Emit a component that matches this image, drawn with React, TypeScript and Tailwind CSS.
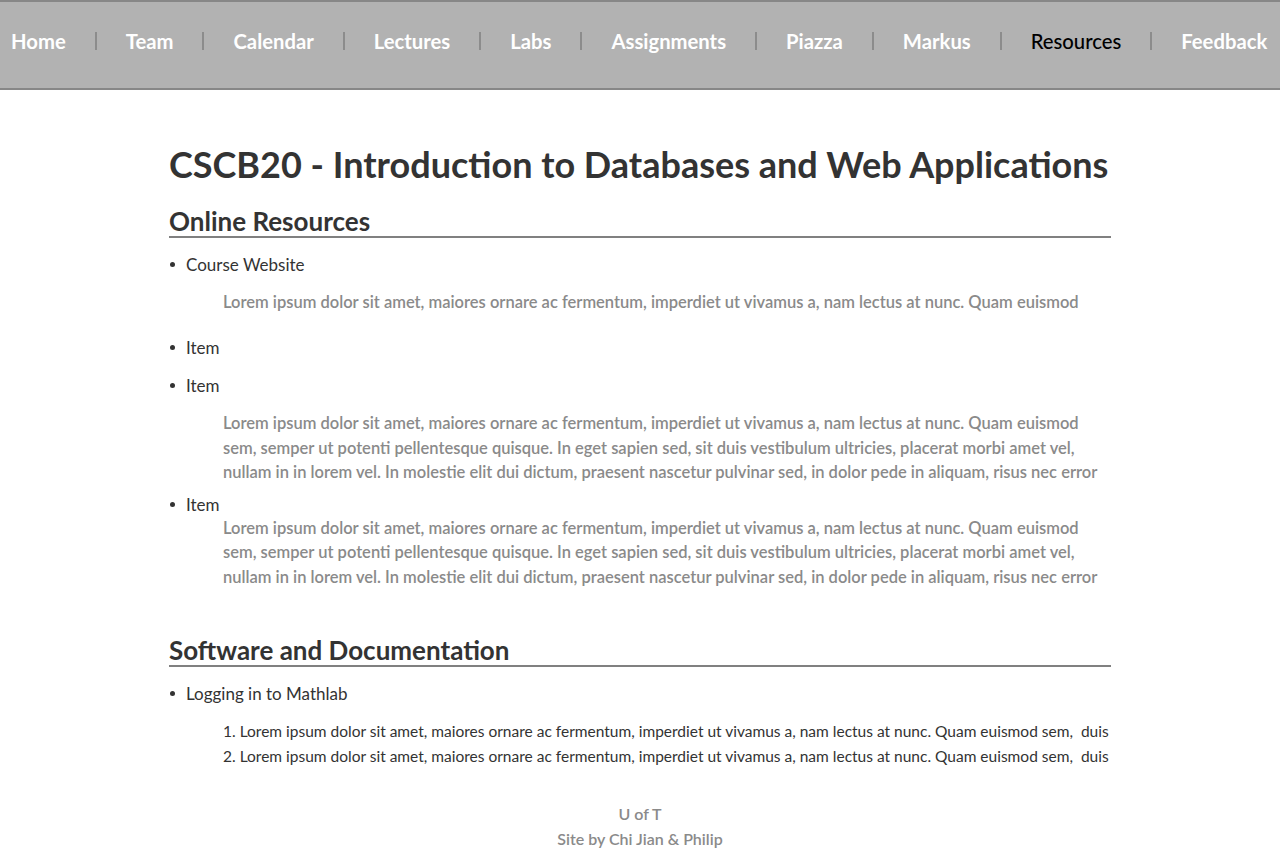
import React from 'react';

const navItems = ['Home', 'Team', 'Calendar', 'Lectures', 'Labs', 'Assignments', 'Piazza', 'Markus', 'Resources', 'Feedback'];

const lorem1 = 'Lorem ipsum dolor sit amet, maiores ornare ac fermentum, imperdiet ut vivamus a, nam lectus at nunc. Quam euismod';
const lorem2 = 'sem, semper ut potenti pellentesque quisque. In eget sapien sed, sit duis vestibulum ultricies, placerat morbi amet vel,';
const lorem3 = 'nullam in in lorem vel. In molestie elit dui dictum, praesent nascetur pulvinar sed, in dolor pede in aliquam, risus nec error';
const olLine = 'Lorem ipsum dolor sit amet, maiores ornare ac fermentum, imperdiet ut vivamus a, nam lectus at nunc. Quam euismod sem,\u00a0 duis';

const NavBar = () => (
  <nav className="h-[90px] border-y-2 border-[#878787] bg-[#b2b2b2]">
    <ul className="flex items-center pt-[27px] pl-[11px]">
      {navItems.map((item, i) => (
        <li key={item} className="flex items-center">
          {i > 0 && <span className="mx-[29px] h-[18px] w-[2px] bg-[#8c8c8c]" />}
          <span
            className={
              item === 'Resources'
                ? 'text-[20.25px] leading-[24px] font-medium text-black'
                : 'text-[20.25px] leading-[24px] font-bold text-white'
            }
          >
            {item}
          </span>
        </li>
      ))}
    </ul>
  </nav>
);

const Bullet = ({ children }: { children: React.ReactNode }) => (
  <li className="flex items-start text-[17px] leading-[24px] text-[#333]">
    <span className="mt-[9px] mr-[11px] ml-[1px] h-[5px] w-[5px] shrink-0 rounded-full bg-[#333]" />
    <span>{children}</span>
  </li>
);

const Para = () => (
  <p className="pl-[54px] text-[16.5px] leading-[24.5px] font-semibold text-[#8a8a8a]">
    {lorem1}
    <br />
    {lorem2}
    <br />
    {lorem3}
  </p>
);

export default function App() {
  return (
    <div className="min-h-screen bg-white font-['Lato',sans-serif]">
      <NavBar />

      <main className="mx-auto w-[942px] pt-[52px]">
        <h1 className="text-[36px] leading-[44px] font-bold text-[#333]">
          CSCB20 - Introduction to Databases and Web Applications
        </h1>

        {/* Online Resources */}
        <h2 className="mt-[20px] border-b-2 border-[#808080] text-[26px] leading-[30px] font-bold text-[#333]">
          Online Resources
        </h2>
        <ul className="mt-[15px]">
          <Bullet>Course Website</Bullet>
          <p className="mt-[13px] pl-[54px] text-[16.5px] leading-[24px] font-semibold text-[#8a8a8a]">{lorem1}</p>
          <div className="mt-[22px]">
            <Bullet>Item</Bullet>
          </div>
          <div className="mt-[14px]">
            <Bullet>Item</Bullet>
          </div>
          <div className="mt-[13px]">
            <Para />
          </div>
          <div className="mt-[8px]">
            <Bullet>Item</Bullet>
          </div>
          <div className="-mt-[1px]">
            <Para />
          </div>
        </ul>

        {/* Software and Documentation */}
        <h2 className="mt-[46px] border-b-2 border-[#808080] text-[26px] leading-[30px] font-bold text-[#333]">
          Software and Documentation
        </h2>
        <ul className="mt-[15px]">
          <Bullet>Logging in to Mathlab</Bullet>
          <ol className="mt-[13px] pl-[54px] text-[15.5px] leading-[24.5px] text-[#333]">
            <li className="overflow-hidden whitespace-nowrap">1. {olLine}</li>
            <li className="overflow-hidden whitespace-nowrap">2. {olLine}</li>
          </ol>
        </ul>
      </main>

      <footer className="mt-[33px] pb-[16px] text-center text-[16px] leading-[25px] font-semibold text-[#8a8a8a]">
        <p>U of T</p>
        <p>Site by Chi Jian &amp; Philip</p>
      </footer>
    </div>
  );
}
